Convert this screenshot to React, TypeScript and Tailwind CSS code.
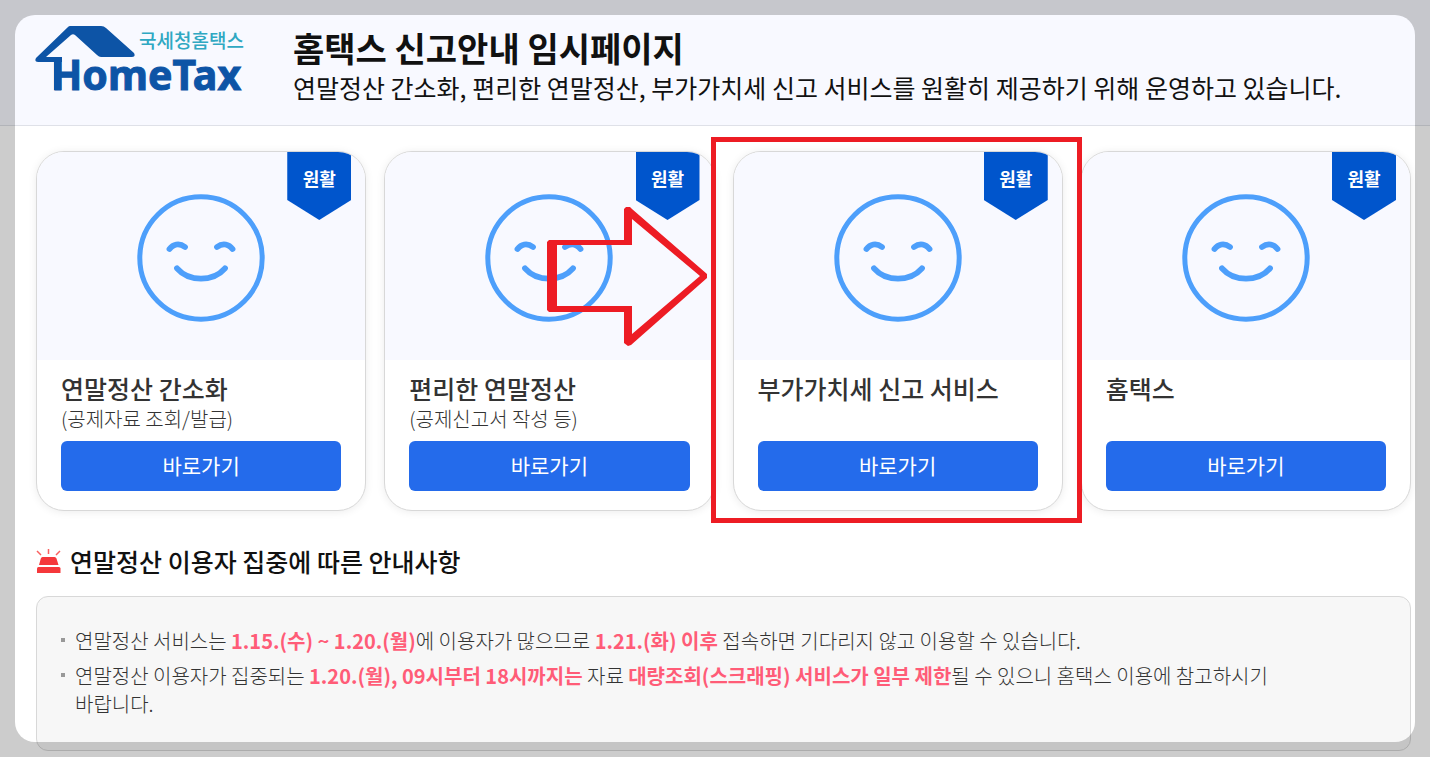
import React from 'react';

const services = [
  { title: '연말정산 간소화', note: '(공제자료 조회/발급)', marked: false },
  { title: '편리한 연말정산', note: '(공제신고서 작성 등)', marked: false },
  { title: '부가가치세 신고 서비스', note: '', marked: true },
  { title: '홈택스', note: '', marked: false },
];

const Logo: React.FC = () => (
  <svg width="212" height="78" viewBox="0 0 212 78" role="img" aria-label="국세청홈택스 HomeTax">
    <path
      fill="#0d54a6"
      fillRule="evenodd"
      d="M35 0H66Q69 0 71 2L99 27Q101 31 97 31H66Q64 31 62 29L40 9Q38 7.500 36 9L11 31H27V36H3Q-1 36 1 32L33 1Q34 0 35 0Z"
    />
    <path fill="#0d54a6" d="M19 33H26.500V64H19Z" />
    <text
      x="16"
      y="64"
      fontSize="41"
      fontWeight="700"
      fill="#0d54a6"
      stroke="#0d54a6"
      strokeWidth="1"
      fontFamily="'Noto Sans', 'Open Sans', sans-serif"
    >
      HomeTax
    </text>
    <text x="104" y="22" fontSize="19" fontWeight="500" fill="#2fa8c2" fontFamily="'Noto Sans CJK KR', sans-serif">
      국세청홈택스
    </text>
  </svg>
);

const Smiley: React.FC = () => (
  <svg width="128" height="128" viewBox="0 0 128 128" fill="none" stroke="#4d9ffb" strokeLinecap="round" aria-hidden="true">
    <circle cx="64" cy="64" r="61.2" strokeWidth="5" />
    <g strokeWidth="5.8">
      <path d="M32.500 55C36 50.500 42 48.500 48 53" />
      <path d="M80 53C86 48.500 92 50.500 95.500 55" />
      <path d="M40 74.300C52 88 76 88 88 74.300" />
    </g>
  </svg>
);

const Siren: React.FC = () => (
  <svg width="26" height="26" viewBox="0 0 26 26" aria-hidden="true">
    <path d="M1 3L5 7M12.500 1V6M24 3L20 7" stroke="#f9605f" strokeWidth="1.5" fill="none" />
    <path d="M6.500 9H18.500Q20 9 20.500 10.500L22.500 17H3L4.800 10.500Q5.200 9 6.500 9Z" fill="#f5383b" />
    <path d="M2.500 19H23Q24.500 19 24.500 20.500V25H1V20.500Q1 19 2.500 19Z" fill="#f5383b" />
  </svg>
);

const Pointer: React.FC = () => (
  <svg width="160" height="140" viewBox="0 0 160 140" className="absolute top-14 -left-[186px] z-20" aria-hidden="true">
    <path
      fill="#ed1c24"
      fillRule="evenodd"
      d="M0 35L2 33H77V2L79 0H83L85 2L160 67V71L84 138L81 139L77 136V105H2L0 103ZM10 38H85V12L153 69L85 127V99H10Z"
    />
  </svg>
);

const ServiceCard: React.FC<{ title: string; note: string; marked: boolean }> = ({ title, note, marked }) => (
  <li className="relative">
    <div className="overflow-hidden rounded-[28px] border border-[#d8d8d8] bg-white shadow-[0_1px_8px_rgba(0,0,0,0.08)]">
      <div className="relative flex justify-center bg-[#f8f9ff] pt-[42px] pb-[38px]">
        <Smiley />
        <div className="absolute top-0 right-3.5 h-[68px] w-16 bg-[#0055cc] pt-3 text-center text-lg leading-7 font-bold text-white [clip-path:polygon(0_0,100%_0,100%_48px,50%_100%,0_48px)]">
          원활
        </div>
      </div>
      <div className="px-6 pb-[19px]">
        <div className="min-h-[81px] pt-3">
          <h2 className="text-[25px] leading-8 font-medium text-[#333]">{title}</h2>
          {note && <p className="text-xl leading-[30px] font-light text-[#333]">{note}</p>}
        </div>
        <a href="#" className="block h-[50px] rounded-md bg-[#246beb] text-center text-[21px] leading-[48px] text-white">
          바로가기
        </a>
      </div>
    </div>
    {marked && (
      <>
        <div className="absolute -top-3.5 -right-[19px] -bottom-3 -left-[22px] z-10 border-5 border-[#ed1c24]"></div>
        <Pointer />
      </>
    )}
  </li>
);

const Notice: React.FC<{ children: React.ReactNode }> = ({ children }) => (
  <li className="flex gap-2.5">
    <span className="mt-[11px] size-1 shrink-0 bg-[#999]"></span>
    <p>{children}</p>
  </li>
);

const Em: React.FC<{ children: React.ReactNode }> = ({ children }) => (
  <strong className="font-bold text-[#ff5c77]">{children}</strong>
);

export default function App() {
  return (
    <div className="relative min-h-screen overflow-hidden bg-white font-['Noto_Sans_CJK_KR',sans-serif] text-[#111]">
      <header className="flex items-start gap-[46px] border-b border-[#dfe1e8] bg-[#f8f9ff] pt-[26px] pr-5 pb-[21px] pl-[35px]">
        <Logo />
        <div>
          <h1 className="text-[34px] leading-[44px] font-bold">홈택스 신고안내 임시페이지</h1>
          <p className="text-[25px] leading-[34px]">
            연말정산 간소화, 편리한 연말정산, 부가가치세 신고 서비스를 원활히 제공하기 위해 운영하고 있습니다.
          </p>
        </div>
      </header>

      <main className="pt-[25px] pr-[19px] pb-1.5 pl-9">
        <ul className="grid grid-cols-4 gap-[18px]">
          {services.map((item) => (
            <ServiceCard key={item.title} {...item} />
          ))}
        </ul>

        <section className="pt-[34px]">
          <h2 className="flex items-center gap-2 text-[25px] leading-8 font-medium">
            <Siren />
            연말정산 이용자 집중에 따른 안내사항
          </h2>
          <ul className="mt-[19px] space-y-[7px] rounded-xl border border-[#d8d8d8] bg-[#f7f7f7] pt-[30px] pr-20 pb-8 pl-6 text-xl leading-7 font-light text-[#333]">
            <Notice>
              연말정산 서비스는 <Em>1.15.(수) ~ 1.20.(월)</Em>에 이용자가 많으므로 <Em>1.21.(화) 이후</Em> 접속하면 기다리지
              않고 이용할 수 있습니다.
            </Notice>
            <Notice>
              연말정산 이용자가 집중되는 <Em>1.20.(월), 09시부터 18시까지는</Em> 자료{' '}
              <Em>대량조회(스크래핑) 서비스가 일부 제한</Em>될 수 있으니 홈택스 이용에 참고하시기{' '}
              <span className="inline-block">바랍니다.</span>
            </Notice>
          </ul>
        </section>
      </main>

      {/* dimmed edge around the page */}
      <div className="pointer-events-none absolute inset-[15px] z-30 rounded-[20px] shadow-[0_0_0_40px_rgba(0,0,0,0.2)]"></div>
    </div>
  );
}
